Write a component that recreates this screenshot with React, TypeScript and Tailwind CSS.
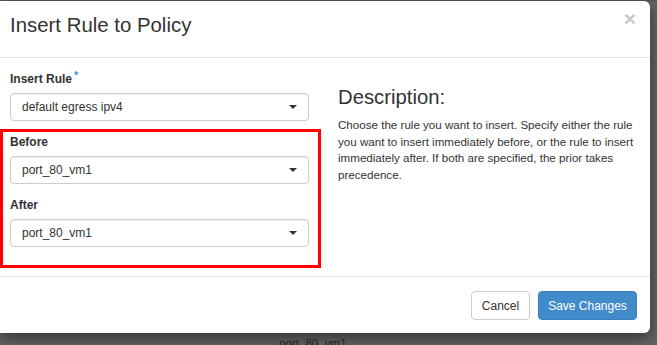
import React from 'react'

function Caret() {
  return <span className="w-0 h-0 border-l-[4px] border-r-[4px] border-t-[4px] border-l-transparent border-r-transparent border-t-[#333]" />
}

function FakeSelect({ value }: { value: string }) {
  return (
    <div className="h-[28px] flex items-center justify-between pl-[11px] pr-[11px] border border-[#ccc] rounded-[4px] bg-white shadow-[inset_0_1px_1px_rgba(0,0,0,0.075)] text-[12px] text-[#333]">
      <span>{value}</span>
      <Caret />
    </div>
  )
}

function Label({ text, required }: { text: string; required?: boolean }) {
  return (
    <div className="text-[12px] leading-[17px] font-bold text-[#333] mb-[5px]">
      {text}
      {required && <span className="relative -top-[4px] ml-[2px] text-[11px] font-bold text-[#4a90d9]">*</span>}
    </div>
  )
}

export default function App() {
  return (
    <div className="w-[657px] h-[345px] overflow-hidden bg-[#646464] font-['Liberation_Sans',Arial,sans-serif]">
      <div className="h-[1px] bg-[#575757]" />
      <div className="w-[650px] h-[332px] bg-white rounded-r-[6px] shadow-[0_5px_15px_rgba(0,0,0,0.5)] flex flex-col">
        {/* header */}
        <div className="h-[57px] border-b border-[#e5e5e5] flex justify-between items-start pl-[10px] pr-[14px]">
          <h4 className="mt-[13px] text-[20.4px] leading-[22px] text-[#333]">Insert Rule to Policy</h4>
          <span className="mt-[6px] text-[21px] leading-[24px] font-bold text-[#c8c8c8]">×</span>
        </div>

        {/* body */}
        <div className="flex h-[219px] border-b border-[#e5e5e5]">
          <div className="w-[321px] pt-[13px]">
            <div className="pl-[10px] pr-[12px]">
              <Label text="Insert Rule" required />
              <FakeSelect value="default egress ipv4" />
            </div>
            <div className="mt-[8px] border-[3px] border-[#ff0000] pl-[7px] pr-[9px] pt-[2px] pb-[18px]">
              <Label text="Before" />
              <FakeSelect value="port_80_vm1" />
              <div className="mt-[13px]">
                <Label text="After" />
                <FakeSelect value="port_80_vm1" />
              </div>
            </div>
          </div>
          <div className="ml-[17px] pt-[28px] w-[302px]">
            <h3 className="text-[20.3px] leading-[22px] text-[#333]">Description:</h3>
            <p className="mt-[9px] text-[11.6px] leading-[16.7px] text-[#333]">
              Choose the rule you want to insert. Specify either the rule you want to insert immediately before, or the rule to insert immediately after. If both are specified, the prior takes precedence.
            </p>
          </div>
        </div>

        {/* footer */}
        <div className="flex justify-end pt-[14px] pr-[13px]">
          <button className="w-[59px] h-[29px] border border-[#ccc] rounded-[4px] bg-white text-[12px] text-[#333]">Cancel</button>
          <button className="ml-[8px] w-[99px] h-[29px] border border-[#3a7fc0] rounded-[4px] bg-[#428bca] text-[12px] text-white">Save Changes</button>
        </div>
      </div>
      <div className="mt-[1px] pl-[279px] text-[11.6px] leading-[17px] text-[#222]">port_80_vm1</div>
    </div>
  )
}
